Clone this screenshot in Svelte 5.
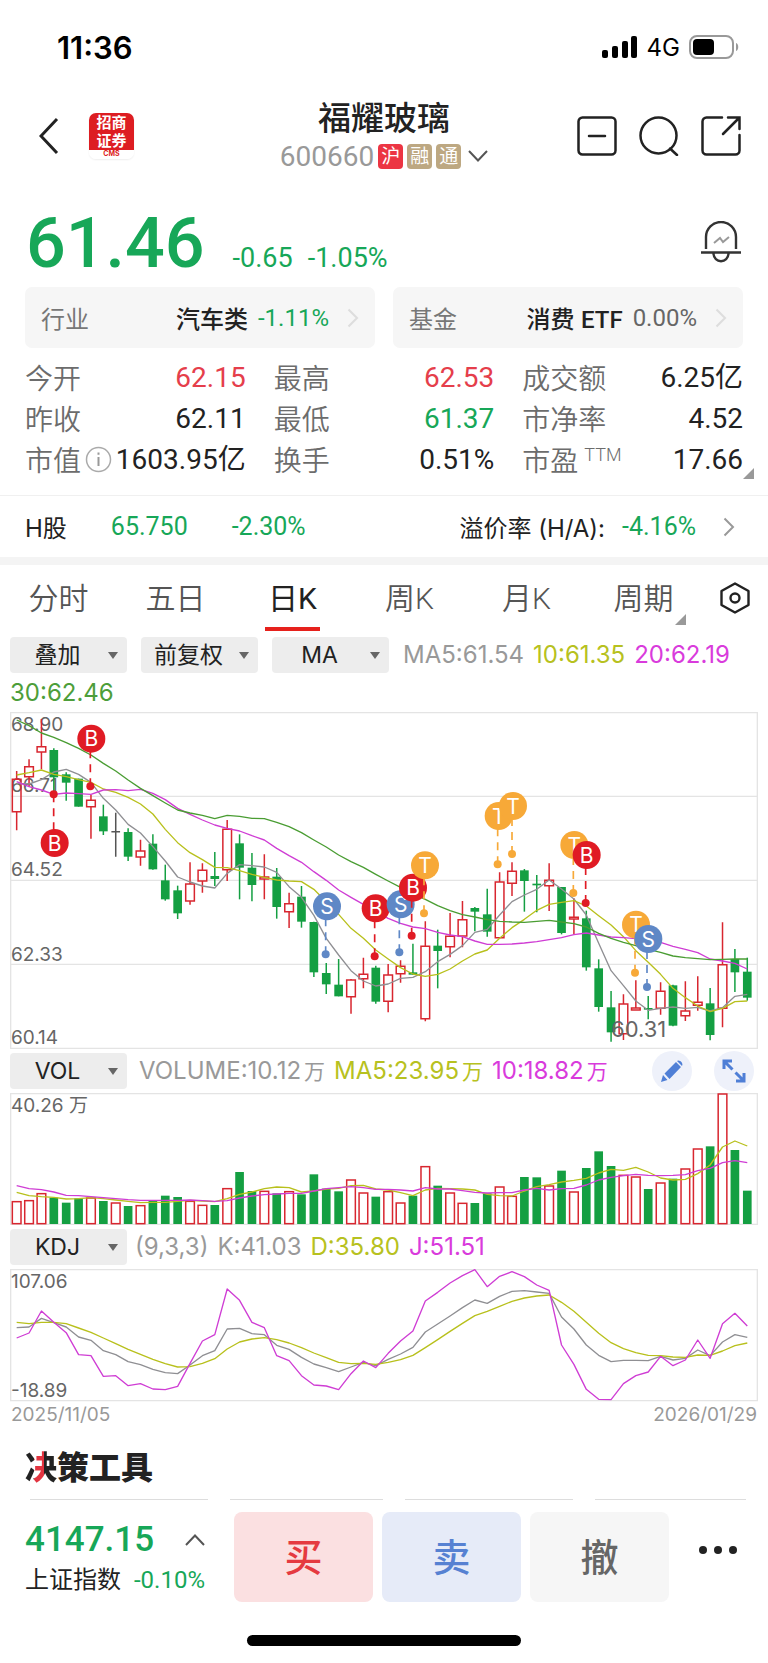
<script>
  // Candles: [kind, high, body top, body bottom, low]; r = rise, g = fall, d = flat
  const candles = [
    ['r',198,221,322,376],['r',163,183,217,245],['r',42,123,143,193],['g',130,135,217,262],['g',202,208,233,287],
    ['g',221,221,305,305],['r',270,284,307,401],['g',299,334,379,390],['d',323,380,380,455],['g',370,381,455,468],
    ['r',404,436,458,482],['g',388,416,493,494],['g',479,526,583,587],['g',542,556,625,642],['r',472,535,590,599],
    ['r',475,494,530,563],['g',441,513,522,543],['r',345,371,496,528],['g',388,415,488,583],['g',444,488,540,589],
    ['r',448,514,524,583],['g',489,515,606,641],['r',563,594,622,669],['g',543,575,650,668],['g',650,651,802,816],
    ['g',774,804,838,867],['g',762,839,874,874],['r',822,823,877,926],['r',758,806,823,850],['g',782,788,890,896],
    ['r',777,808,891,922],['r',766,782,808,833],['g',716,802,809,809],['r',649,722,943,949],['g',674,722,738,850],
    ['r',624,692,727,757],['r',588,642,695,727],['g',606,609,620,679],['g',551,628,680,695],['r',502,529,700,700],
    ['r',472,497,537,573],['g',492,496,528,620],['g',510,536,541,622],['r',475,524,544,618],['g',546,546,684,688],
    ['r',580,635,644,688],['g',617,640,787,797],['g',763,790,906,920],['g',858,907,982,1010],['r',868,895,988,1005],
    ['r',826,907,917,917],['g',873,909,914,943],['r',832,857,912,929],['g',839,841,962,964],['r',829,916,934,948],
    ['r',814,890,903,917],['g',849,895,990,1006],['r',652,777,912,967],['g',732,762,802,861],['g',758,800,878,887]
  ];
  const ma5 = [235,237,224,201,193,208,232,280,315,358,384,425,468,516,531,543,549,505,479,482,486,502,545,577,631,700,750,797,828,843,837,820,817,800,770,748,722,682,673,630,590,570,553,525,552,582,630,715,797,842,888,916,910,906,910,907,918,908,874,868];
  const ma10 = [210,203,195,208,215,224,232,252,262,277,297,327,373,413,443,464,487,488,497,508,517,525,528,530,553,590,628,670,700,735,762,788,807,814,808,792,768,747,735,700,668,643,616,598,592,587,603,632,660,695,737,772,808,850,878,903,920,910,890,888];
  const ma20 = [230,245,255,268,264,266,268,255,254,257,253,265,284,310,328,345,360,370,378,392,405,430,452,472,500,526,555,577,598,620,640,655,666,671,682,690,695,708,718,718,717,714,710,704,698,689,684,690,696,698,701,705,712,724,733,743,762,768,775,792];
  const ma30 = [45,62,84,97,113,130,150,175,198,225,250,272,294,315,324,331,341,331,334,340,341,352,365,383,405,426,450,470,487,508,528,547,566,583,602,617,629,636,644,649,651,652,649,646,651,656,666,685,700,712,722,733,742,753,758,761,764,763,762,762];

  // Trade markers: [letter, badge x, badge y, dot x, dot y]
  const marks = [
    ['B',274,101,271,244],['B',164,414,161,268],['S',981,604,977,748],['B',1127,610,1124,754],['S',1202,598,1198,742],
    ['B',1239,548,1235,692],['T',1275,481,1272,625],['T',1496,333,1493,478],['T',1539,303,1536,447],['T',1723,420,1720,564],
    ['B',1760,450,1757,594],['T',1908,659,1905,803],['S',1945,702,1941,846]
  ];
  const markColor = { B: '#e01b24', S: '#5f88c6', T: '#f7a938' };

  const vols = [454,451,430,443,458,445,443,453,458,468,466,452,437,441,453,465,465,415,366,423,423,430,424,433,373,416,424,389,428,440,424,458,437,349,407,428,459,459,430,410,438,381,382,407,362,425,354,304,348,375,380,417,398,386,356,296,289,131,300,422];
  const volRise = new Set([0,1,2,6,8,10,14,15,17,20,22,27,28,30,31,33,35,36,39,40,43,45,49,50,52,54,55,57]);
  const vol5 = [427,437,440,442,447,446,443,446,450,454,458,457,457,454,451,453,455,446,433,426,416,411,413,426,423,417,415,407,406,417,420,428,437,420,415,416,417,420,433,437,438,423,410,404,396,391,385,369,358,361,352,366,384,390,388,371,345,291,273,288];
  const vol10 = [407,416,419,426,436,437,440,443,446,449,451,451,451,451,450,452,454,452,444,438,434,432,430,430,423,416,413,410,413,418,418,420,423,413,417,417,422,427,429,428,428,420,415,420,416,415,405,390,382,377,373,376,377,376,374,362,355,338,332,338];

  const lineK = [293,291,265,278,291,321,331,362,374,395,404,418,428,431,405,377,362,297,295,311,314,346,358,382,402,413,425,411,397,407,388,372,352,306,282,258,233,210,220,199,184,182,186,190,261,297,345,376,395,391,391,392,379,390,385,360,377,336,314,322];
  const lineD = [277,281,277,277,281,294,307,324,341,358,373,388,401,411,410,400,386,357,336,327,323,329,339,353,369,383,397,401,400,403,397,389,376,353,329,304,280,257,244,229,214,204,198,195,217,244,277,310,338,356,368,376,377,381,382,375,376,363,347,339];
  const lineJ = [324,309,243,277,308,374,377,439,437,467,461,477,479,469,400,333,314,177,211,277,293,377,392,437,465,468,479,431,393,413,370,333,303,213,187,159,137,119,170,139,125,140,165,181,345,403,478,508,509,461,437,426,379,407,390,330,385,281,250,288];

  const cx = (i) => 50 + i * 37.15;
  const pts = (ys) => ys.map((y, i) => `${cx(i)},${y}`).join(' ');

  const stats = [
    ['今开', '62.15', 'up'], ['最高', '62.53', 'up'], ['成交额', '6.25亿', ''],
    ['昨收', '62.11', ''], ['最低', '61.37', 'down'], ['市净率', '4.52', ''],
    ['市值', '1603.95亿', '', 'info'], ['换手', '0.51%', ''], ['市盈', '17.66', '', 'ttm']
  ];
  const tabs = ['分时', '五日', '日K', '周K', '月K', '周期'];
  let active = $state('日K');
</script>

{#snippet picker(label)}
  <label class="picker"><select aria-label={label}><option>{label}</option></select></label>
{/snippet}

{#snippet chevron()}
  <svg class="chev" width="12" height="20" viewBox="0 0 12 20"><path d="M1.5 1.500 10 10 1.500 18.500" /></svg>
{/snippet}

<main>
  <div class="status">
    <time>11:36</time>
    <div class="signal">
      <svg width="36" height="22" viewBox="0 0 36 22"><rect x="0" y="14" width="6" height="8" rx="2" /><rect x="10" y="10" width="6" height="12" rx="2" /><rect x="20" y="5" width="6" height="17" rx="2" /><rect x="29" y="0" width="6" height="22" rx="2" /></svg>
      <span>4G</span>
      <svg width="51" height="24" viewBox="0 0 51 24"><rect x="1" y="1" width="43" height="22" rx="7" fill="none" stroke="#999" stroke-width="2" /><rect x="4" y="4" width="21" height="16" rx="4" /><path d="M47 8c3 1 3 7 0 8z" fill="#999" /></svg>
    </div>
  </div>

  <header>
    <div class="side">
      <button aria-label="返回"><svg width="20" height="38" viewBox="0 0 20 38"><path d="M18 2 2 19 18 36" fill="none" stroke="#222" stroke-width="3" /></svg></button>
      <div class="logo"><b>招商</b><b>证券</b><small>CMS</small></div>
    </div>
    <div class="name">
      <h1>福耀玻璃</h1>
      <div class="code">
        <span class="num">600660</span><i class="hu">沪</i><i>融</i><i>通</i>
        <svg width="20" height="12" viewBox="0 0 20 12"><path d="M1 1 10 10.500 19 1" fill="none" stroke="#555" stroke-width="2" /></svg>
      </div>
    </div>
    <div class="side tools">
      <button aria-label="移除自选"><svg width="40" height="40" viewBox="0 0 40 40"><rect x="1.500" y="1.500" width="37" height="37" rx="4" /><path d="M12 20h16" /></svg></button>
      <button aria-label="搜索"><svg width="40" height="40" viewBox="0 0 40 40"><circle cx="19.500" cy="19.500" r="18" /><path d="M31 32.500 38 39" /></svg></button>
      <button aria-label="分享"><svg width="40" height="40" viewBox="0 0 40 40"><path d="M21 1.500H5.500a4 4 0 0 0-4 4v29a4 4 0 0 0 4 4h29a4 4 0 0 0 4-4V19M27 1.500h11.500V13M38 2 22 18" /></svg></button>
    </div>
  </header>

  <section class="price">
    <strong class="num">61.46</strong>
    <span class="num">-0.65</span>
    <span class="num">-1.05%</span>
    <button aria-label="预警"><svg width="40" height="42" viewBox="0 0 40 42" fill="none" stroke="#333" stroke-width="2.400"><path d="M5 28V16a15 15 0 0 1 30 0v12" /><path d="M0 31.500h40M12.500 32c0 11 15 11 15 0" /><path d="m13 22 6-5 3 4 6-5" stroke="#999" stroke-width="2" /></svg></button>
  </section>

  <section class="cards">
    <a href="#industry"><span class="key">行业</span><b>汽车类</b><span class="num down">-1.11%</span>{@render chevron()}</a>
    <a href="#fund"><span class="key">基金</span><b>消费 <em>ETF</em></b><span class="num flat">0.00%</span>{@render chevron()}</a>
  </section>

  <section class="stats">
    {#each stats as [key, value, tone, extra]}
      <div class="stat">
        <span>{key}{#if extra === 'ttm'}<sup>TTM</sup>{/if}</span>
        {#if extra === 'info'}<svg class="info" width="27" height="27" viewBox="0 0 27 27"><circle cx="13.500" cy="13.500" r="12" fill="none" stroke="#aaa" stroke-width="1.500" /><path d="M13.500 11v9M13.500 6.500v2.200" stroke="#999" stroke-width="2" /></svg>{/if}
        <span class="num {tone}">{value}</span>
      </div>
    {/each}
    <i class="corner"></i>
  </section>

  <a class="hshare" href="#h-share">
    <span>H股</span><span class="num down">65.750</span><span class="num down">-2.30%</span>
    <span class="ratio">溢价率 (H/A):</span><span class="num down">-4.16%</span>{@render chevron()}
  </a>

  <nav>
    {#each tabs as tab}
      <button class:on={active === tab} class:more={tab === '周期'} onclick={() => (active = tab)}>{tab}</button>
    {/each}
    <button class="gear" aria-label="设置"><svg width="30" height="32" viewBox="0 0 30 32" fill="none" stroke="#222" stroke-width="2.400"><path d="M15 1.500 28.500 9v14L15 30.500 1.500 23V9z" stroke-linejoin="round" /><circle cx="15" cy="16" r="4.500" /></svg></button>
  </nav>

  <div class="legend main-legend">
    {@render picker('叠加')}{@render picker('前复权')}{@render picker('MA')}
    <span class="c5">MA5:61.54</span><span class="c10">10:61.35</span><span class="c20">20:62.19</span><span class="c30">30:62.46</span>
  </div>

  <svg class="chart" viewBox="30 21 2244 1011" role="img" aria-label="日K">
    <path class="grid" d="M32 23H2272V1030H32zM32 274H2272M32 526H2272M32 778H2272" />
    {#each [['68.90', 79], ['66.71', 262], ['64.52', 514], ['62.33', 767], ['60.14', 1018]] as [t, y]}
      <text x="33" {y}>{t}</text>
    {/each}
    {#each candles as [kind, hi, top, bot, lo], i}
      {#if kind === 'r'}
        <path class="rise" d="M{cx(i)} {hi}V{top}M{cx(i)} {bot}V{lo}M{cx(i) - 13} {top + 2}h26V{Math.max(bot - 2, top + 6)}h-26z" />
      {:else if kind === 'g'}
        <path class="fall" d="M{cx(i)} {hi}V{lo}" />
        <rect class="solid" x={cx(i) - 13} y={top} width="26" height={bot - top} />
      {:else}
        <path class="even" d="M{cx(i)} {hi}V{lo}M{cx(i) - 13} {top}h26" />
      {/if}
    {/each}
    <polyline class="l5" points={pts(ma5)} />
    <polyline class="l10" points={pts(ma10)} />
    <polyline class="l20" points={pts(ma20)} />
    <polyline class="l30" points={pts(ma30)} />
    {#each marks as [letter, x, y, dx, dy]}
      <path d="M{dx} {dy}V{y}" stroke={markColor[letter]} stroke-width="5" stroke-dasharray="24 18" fill="none" />
      <circle cx={dx} cy={dy} r="12" fill={markColor[letter]} />
      <circle cx={x} cy={y} r="42" fill={markColor[letter]} />
      <text class="mark" {x} y={y + 23}>{letter}</text>
    {/each}
    <text class="low" x="1833" y="997">60.31</text>
  </svg>

  <div class="legend">
    {@render picker('VOL')}
    <span class="c5">VOLUME:10.12<small>万</small></span><span class="c10">MA5:23.95<small>万</small></span><span class="c20">10:18.82<small>万</small></span>
    <div class="actions">
      <button aria-label="画线"><svg width="24" height="24" viewBox="0 0 24 24" fill="#4f7fd6"><path d="M1 23l2-7 4.500 5zM4.500 14.500 16 3l5 5L9.500 20zM17 2c2-2 7 2 5 5z" /></svg></button>
      <button aria-label="全屏"><svg width="24" height="24" viewBox="0 0 24 24" fill="none" stroke="#4f7fd6" stroke-width="3"><path d="M2 10V2h8M2 2l8.500 8.500M22 14v8h-8M22 22l-8.500-8.500" /></svg></button>
    </div>
  </div>

  <svg class="chart" viewBox="30 129 2244 396" role="img" aria-label="VOL">
    <path class="grid" d="M32 131H2272V523H32z" />
    <text x="33" y="186">40.26 万</text>
    {#each vols as y, i}
      {#if volRise.has(i)}
        <rect class="rise" x={cx(i) - 13} y={y + 1} width="26" height={520 - y} />
      {:else}
        <rect class="solid" x={cx(i) - 13} {y} width="26" height={522 - y} />
      {/if}
    {/each}
    <polyline class="l10" points={pts(vol5)} />
    <polyline class="l20" points={pts(vol10)} />
  </svg>

  <div class="legend kdj">
    {@render picker('KDJ')}
    <span class="c5">(9,3,3)</span><span class="c5">K:41.03</span><span class="c10">D:35.80</span><span class="c20">J:51.51</span>
  </div>

  <svg class="chart" viewBox="30 117 2244 399" role="img" aria-label="KDJ">
    <path class="grid" d="M32 119H2272V512H32z" />
    <text x="33" y="174">107.06</text>
    <text x="33" y="500">-18.89</text>
    <polyline class="l5" points={pts(lineK)} />
    <polyline class="l10" points={pts(lineD)} />
    <polyline class="l20" points={pts(lineJ)} />
  </svg>
  <div class="dates"><span>2025/11/05</span><span>2026/01/29</span></div>

  <section class="decide">
    <h2><span>决</span>策工具</h2>
    <div class="edges"><i></i><i></i><i></i><i></i></div>
  </section>

  <footer>
    <div class="index">
      <div><strong class="num down">4147.15</strong><svg width="20" height="12" viewBox="0 0 20 12"><path d="M1 11 10 1.500 19 11" fill="none" stroke="#555" stroke-width="2" /></svg></div>
      <div><span>上证指数</span><span class="num down">-0.10%</span></div>
    </div>
    <button class="buy">买</button>
    <button class="sell">卖</button>
    <button class="cancel">撤</button>
    <button class="dots" aria-label="更多"><svg width="38" height="8" viewBox="0 0 38 8" fill="#222"><circle cx="4" cy="4" r="4" /><circle cx="19" cy="4" r="4" /><circle cx="34" cy="4" r="4" /></svg></button>
  </footer>
  <div class="home"></div>
</main>

<style>
  :global(body) { margin: 0; background: #fff; }
  main { font-family: Inter, "Noto Sans CJK SC", sans-serif; color: #222; background: #fff; overflow: hidden; }
  button { border: 0; padding: 0; background: none; font: inherit; color: inherit; cursor: pointer; display: flex; align-items: center; justify-content: center; }
  a { color: inherit; text-decoration: none; }
  i, em { font-style: normal; }
  h1, h2 { margin: 0; }
  svg { display: block; flex: none; }
  .num { font-family: Roboto, "Noto Sans CJK SC", sans-serif; }
  .up { color: #e53e4b; }
  .down { color: #17a758; }
  .stat .num.up { color: #e53e4b; }
  .stat .num.down { color: #17a758; }

  .status { height: 94px; padding: 0 28px 0 57px; display: flex; align-items: center; justify-content: space-between; box-sizing: border-box; color: #000; }
  .status time { font-size: 31px; font-weight: 600; }
  .signal { display: flex; align-items: center; gap: 9px; font-size: 24px; font-weight: 400; }

  header { height: 84px; padding: 0 27px; display: grid; grid-template-columns: 1fr auto 1fr; align-items: center; box-sizing: border-box; }
  .side { display: flex; align-items: center; gap: 30px; padding-left: 12px; }
  .tools { justify-content: flex-end; gap: 22px; }
  .tools svg { fill: none; stroke: #222; stroke-width: 2.5; stroke-linecap: round; }
  .logo { width: 45px; height: 46px; border-radius: 7px; background: linear-gradient(#dd1d22 37px, #fff 37px); color: #fff; display: flex; flex-direction: column; align-items: center; box-shadow: 0 1px 2px #eee; }
  .logo b { font-family: "Noto Sans CJK SC", sans-serif; font-size: 15px; line-height: 18px; font-weight: 700; }
  .logo small { color: #dd1d22; font-size: 7px; line-height: 10px; font-weight: 700; }
  .name { display: flex; flex-direction: column; align-items: center; }
  h1 { font-size: 33px; line-height: 40px; font-weight: 500; }
  .code { display: flex; align-items: center; gap: 4px; height: 36px; color: #999; font-size: 28px; }
  .code i { width: 25px; height: 25px; border-radius: 4px; background: #bda882; color: #fff; font-size: 19px; line-height: 25px; text-align: center; }
  .code .hu { background: #ec3543; }
  .code svg { margin-left: 3px; }

  .price { height: 109px; padding: 0 27px 0 26px; display: flex; align-items: baseline; color: #17a758; box-sizing: border-box; }
  .price strong { font-size: 70px; line-height: 130px; font-weight: 500; margin-right: 28px; }
  .price span { font-size: 27px; margin-right: 15px; }
  .price button { align-self: flex-start; margin: 43px 0 0 auto; }

  .cards { padding: 0 25px; display: grid; grid-template-columns: 1fr 1fr; gap: 18px; }
  .cards a { height: 61px; padding: 0 16px; border-radius: 7px; background: #f6f6f6; display: flex; align-items: center; gap: 10px; font-size: 24px; }
  .cards .key { color: #777; margin-right: auto; }
  .cards b { font-weight: 500; }
  .cards em { font-family: Roboto, sans-serif; }
  .flat { color: #666; }
  .chev { fill: none; stroke: #999; stroke-width: 2; }
  .cards .chev { stroke: #ddd; margin-left: 8px; }

  .stats { position: relative; padding: 9px 25px 15px; display: grid; grid-template-columns: repeat(3, 1fr); column-gap: 28px; border-bottom: 1px solid #f0f0f0; }
  .stat { height: 41px; display: flex; align-items: center; justify-content: space-between; font-size: 28px; line-height: 41px; color: #6c6c6c; white-space: nowrap; font-family: "Noto Sans CJK SC", sans-serif; font-weight: 350; }
  .stat .num { color: #222; font-weight: 400; }
  .stat sup { margin-left: 6px; font-family: Roboto, sans-serif; font-size: 18px; line-height: 0; }
  .corner, .more::after { position: absolute; border-style: solid; border-color: transparent transparent #999 transparent; border-width: 0 0 11px 11px; content: ""; }
  .corner { right: 14px; bottom: 16px; }

  .hshare { height: 61px; padding: 0 33px 0 25px; display: flex; align-items: center; font-size: 24px; border-bottom: 8px solid #f4f4f4; }
  .hshare .num { margin-left: 44px; font-size: 25px; }
  .hshare .ratio { margin-left: auto; }
  .hshare .ratio + .num { margin-left: 17px; margin-right: 27px; }

  nav { height: 71px; display: grid; grid-template-columns: repeat(6, 1fr) 66px; justify-items: center; align-items: start; }
  nav button { position: relative; min-width: 55px; height: 66px; font-family: Roboto, "Noto Sans CJK SC", sans-serif; font-size: 30px; font-weight: 350; color: #555; border-bottom: 4px solid transparent; box-sizing: border-box; }
  nav .gear { height: 70px; }
  nav .on { color: #222; border-color: #e6211c; font-weight: 400; }
  .more::after { right: -12px; bottom: 2px; }

  .legend { min-height: 44px; padding: 0 10px; display: flex; flex-wrap: wrap; align-items: center; font-size: 24px; line-height: 36px; white-space: nowrap; }
  .legend span { margin-right: 9px; }
  .main-legend { height: 76px; }
  .main-legend .picker { margin-right: 14px; }
  .picker { position: relative; width: 117px; height: 36px; margin-right: 12px; border-radius: 4px; background: #ededed; }
  .kdj .picker { margin-right: 8px; }
  .picker::after { content: ""; position: absolute; right: 9px; top: 15px; border: 5px solid transparent; border-top: 7px solid #666; border-bottom: 0; pointer-events: none; }
  select { width: 100%; height: 100%; padding: 0 22px 0 0; border: 0; background: none; appearance: none; font: inherit; font-size: 23px; line-height: 30px; color: #222; text-align: center; text-align-last: center; }
  .c5 { color: #999; }
  .c10 { color: #b7c120; }
  .c20 { color: #d93bdc; }
  .c30 { color: #4d9e3a; }
  .legend small { margin-left: 3px; font-size: 21px; }
  .actions { margin-left: auto; margin-right: 4px; display: flex; gap: 22px; }
  .actions button { width: 40px; height: 40px; border-radius: 50%; background: #eef1fa; }

  .chart { width: calc(100% - 20px); height: auto; margin: 0 10px; }
  .chart text { font-size: 57px; fill: #666; }
  .chart .low { font-size: 66px; }
  .chart .mark { font-size: 63px; fill: #fff; text-anchor: middle; }
  .grid { fill: none; stroke: #e4e4e4; stroke-width: 4; }
  .rise, .fall, .even { fill: none; stroke: #d8262f; stroke-width: 4.5; }
  .fall { stroke: #149f42; }
  .even { stroke: #555; }
  .solid { fill: #149f42; }
  polyline { fill: none; stroke-width: 4; stroke-linejoin: round; }
  .l5 { stroke: #8f8f93; }
  .l10 { stroke: #b8c01c; }
  .l20 { stroke: #cf3dd4; }
  .l30 { stroke: #4a9d33; }

  .dates { padding: 0 11px; display: flex; justify-content: space-between; font-size: 19px; line-height: 26px; color: #999; }

  .decide { padding: 16px 25px 0; }
  h2 { font-size: 32px; line-height: 48px; font-weight: 900; }
  h2 span { color: transparent; background: linear-gradient(90deg, #222 27%, #e23440 27% 58%, #222 58%); background-clip: text; -webkit-background-clip: text; }
  .edges { display: grid; grid-template-columns: 178fr 152fr 168fr 151fr; gap: 22px; margin: 7px -3px 0 5px; }
  .edges i { height: 1px; background: #ddd; }

  footer { padding: 12px 25px 0; display: flex; gap: 9px; }
  .index { width: 180px; margin-right: 20px; padding-top: 4px; white-space: nowrap; }
  .index div { display: flex; justify-content: space-between; align-items: center; font-size: 24px; line-height: 32px; }
  .index div:first-child { line-height: 48px; }
  .index strong { font-size: 35px; font-weight: 500; }
  footer button { flex: 1; height: 90px; padding-bottom: 5px; box-sizing: border-box; border-radius: 8px; font-size: 38px; font-weight: 500; }
  .buy { background: #fbe0e1; color: #e53a40; }
  .sell { background: #e6ebf8; color: #5681d2; }
  .cancel { background: #f6f6f6; color: #666; }
  footer .dots { flex: 0 0 65px; height: 80px; padding-left: 15px; }
  .home { width: 274px; height: 11px; margin: 33px auto 16px; border-radius: 6px; background: #000; }
</style>
